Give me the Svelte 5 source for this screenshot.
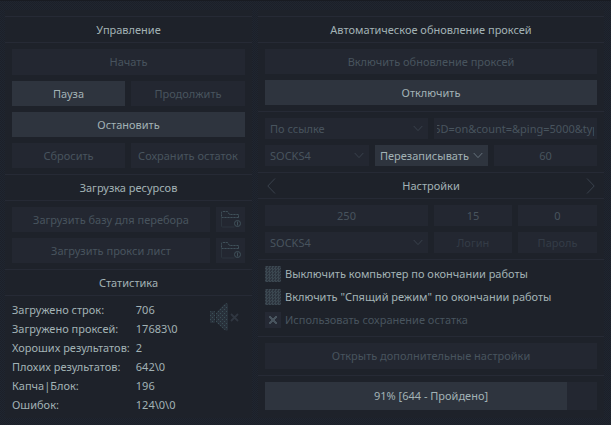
<script>
  import { onMount } from 'svelte';

  const stats = [
    ['Загружено строк:', '706'],
    ['Загружено проксей:', '17683\\0'],
    ['Хороших результатов:', '2'],
    ['Плохих результатов:', '642\\0'],
    ['Капча|Блок:', '196'],
    ['Ошибок:', '124\\0\\0']
  ];
  const loaders = ['Загрузить базу для перебора', 'Загрузить прокси лист'];
  const progress = 91;
  let link;

  onMount(() => {
    link.scrollLeft = 12;
  });
</script>

{#snippet chevron()}
  <svg class="chevron" width="10" height="7" viewBox="0 0 10 7" aria-hidden="true"><path d="M.7 1 5 5.6 9.3 1" /></svg>
{/snippet}

{#snippet folder()}
  <svg class="folder" width="20" height="17" viewBox="0 0 20 17" aria-hidden="true">
    <path d="M.5 5.5v-4q0-1 1-1h5l2 3h9v3M.5 6.500h17M.5 7v8q0 1 1 1h12" stroke="#2c353e" />
    <path stroke-dasharray="2 1" d="M.5 5.5v-4q0-1 1-1h5l2 3h9v3M.5 6.500h17" />
    <circle cx="16.500" cy="12.500" r="3" />
    <path d="M16.500 10.500v4" />
  </svg>
{/snippet}

<main>
  <section class="panel">
    <h2>Управление</h2>
    <div class="group controls">
      <button class="wide tall" disabled>Начать</button>
      <button>Пауза</button>
      <button disabled>Продолжить</button>
      <button class="wide">Остановить</button>
      <button disabled>Сбросить</button>
      <button disabled>Сохранить остаток</button>
    </div>
    <h2>Загрузка ресурсов</h2>
    <div class="group loaders">
      {#each loaders as name}
        <button disabled>{name}</button>
        <button disabled aria-label={name}>{@render folder()}</button>
      {/each}
    </div>
    <h2>Статистика</h2>
    <div class="stats">
      <dl>
        {#each stats as [label, value]}
          <dt>{label}</dt>
          <dd>{value}</dd>
        {/each}
      </dl>
      <button class="sound" aria-label="Звук">
        <svg width="29" height="29" viewBox="0 0 29 29" aria-hidden="true">
          <defs>
            <pattern id="dots" width="4" height="4" patternUnits="userSpaceOnUse">
              <rect width="4" height="4" fill="#29313b" />
              <path fill="#3b5057" d="M0 0h1v1H0zM2 2h1v1H2z" />
            </pattern>
          </defs>
          <path fill="url(#dots)" d="M1 8h3q1 0 1 1v10q0 1-1 1H1q-1 0-1-1V9q0-1 1-1zM6 10l8-8.500q4-2.500 4 .5v24q0 3-4 .5L6 19z" />
          <path stroke="#303741" stroke-width="1.800" d="M21 11l7 7M28 11l-7 7" />
        </svg>
      </button>
    </div>
  </section>

  <section class="panel">
    <h2>Автоматическое обновление проксей</h2>
    <div class="group stack">
      <button disabled>Включить обновление проксей</button>
      <button>Отключить</button>
    </div>
    <div class="group fields rule">
      <div class="row halves">
        <span class="select">
          <select disabled aria-label="Источник"><option>По ссылке</option></select>{@render chevron()}
        </span>
        <input class="link" bind:this={link} disabled aria-label="Ссылка" value="%5D=on&count=&ping=5000&type=" />
      </div>
      <div class="row thirds">
        <span class="select">
          <select disabled aria-label="Тип прокси"><option>SOCKS4</option></select>{@render chevron()}
        </span>
        <span class="select on">
          <select aria-label="Режим"><option>Перезаписывать</option></select>{@render chevron()}
        </span>
        <input disabled aria-label="Интервал" value="60" />
      </div>
    </div>
    <div class="pager">
      <h2>Настройки</h2>
      <button class="arrow prev" aria-label="Назад"><svg width="9" height="16" viewBox="0 0 9 16"><path d="M8 .5.800 8 8 15.500" /></svg></button>
      <button class="arrow next" aria-label="Вперёд"><svg width="9" height="16" viewBox="0 0 9 16"><path d="M1 .5 8.200 8 1 15.500" /></svg></button>
    </div>
    <div class="group fields">
      <div class="row quarters">
        <input disabled aria-label="Потоки" value="250" />
        <input disabled aria-label="Таймаут" value="15" />
        <input disabled aria-label="Пауза" value="0" />
      </div>
      <div class="row quarters">
        <span class="select">
          <select disabled aria-label="Протокол"><option>SOCKS4</option></select>{@render chevron()}
        </span>
        <input disabled aria-label="Логин" placeholder="Логин" />
        <input disabled aria-label="Пароль" placeholder="Пароль" />
      </div>
    </div>
    <div class="group checks rule">
      <label><input type="checkbox" />Выключить компьютер по окончании работы</label>
      <label><input type="checkbox" />Включить "Спящий режим" по окончании работы</label>
      <label class="off"><input type="checkbox" checked disabled />Использовать сохранение остатка</label>
    </div>
    <div class="group stack rule">
      <button class="tall" disabled>Открыть дополнительные настройки</button>
    </div>
    <div class="group rule">
      <div class="progress" role="progressbar" aria-label="Прогресс" aria-valuenow={progress}>
        <div class="fill" style="width: {progress}%"></div>
        <span>{progress}% [644 - Пройдено]</span>
      </div>
    </div>
  </section>
</main>

<style>
  :global(body) {
    background: #1c1f28;
  }
  main {
    box-sizing: border-box;
    min-height: 100vh;
    display: grid;
    grid-template-columns: 247fr 346fr;
    gap: 6px;
    align-items: stretch;
    padding: 9px 7px 8px 5px;
    border-top: 1px solid #181b22;
    background: repeating-conic-gradient(#1c1f28 0 25%, #1f2630 0 50%) 0 0 / 2px 2px;
    color: #a2b2b5;
    font: 11px/16px "Noto Sans", "Open Sans", sans-serif;
  }
  .panel {
    min-width: 0;
    padding-top: 6px;
    background: #1e222a;
  }
  h2 {
    margin: 0;
    border: solid #262a35;
    border-width: 1px 0;
    font: inherit;
    line-height: 25px;
    text-align: center;
  }
  .group {
    padding: 6px 7px;
  }
  .rule {
    border-top: 1px solid #262a35;
  }
  .controls,
  .loaders,
  .stack,
  .fields,
  .row {
    display: grid;
    gap: 6px;
  }
  .controls {
    grid-template-columns: 113fr 114fr;
  }
  .wide {
    grid-column: 1 / -1;
  }
  .loaders {
    grid-template-columns: 1fr 29px;
  }
  .halves {
    grid-template-columns: 1fr 1fr;
  }
  .thirds {
    grid-template-columns: 104fr 113fr 103fr;
  }
  .quarters {
    grid-template-columns: 163fr 78fr 79fr;
  }
  button,
  input,
  select {
    box-sizing: border-box;
    min-width: 0;
    margin: 0;
    padding: 0;
    border: 0;
    border-radius: 0;
    background: #2e343e;
    color: inherit;
    font: inherit;
  }
  button {
    height: 25px;
    text-align: center;
    white-space: nowrap;
  }
  .tall {
    height: 26px;
  }
  button:disabled,
  input:disabled,
  select:disabled {
    background: #232731;
    color: #48545e;
    opacity: 1;
  }
  input {
    width: 100%;
    height: 21px;
    text-align: center;
  }
  input::placeholder {
    color: #343c47;
    opacity: 1;
  }
  .link {
    border: solid #232731;
    border-width: 0 3px;
    text-align: left;
  }
  .select {
    position: relative;
    display: flex;
    min-width: 0;
  }
  select {
    appearance: none;
    width: 100%;
    height: 21px;
    padding-left: 5px;
  }
  .chevron {
    position: absolute;
    right: 5px;
    top: 7px;
    pointer-events: none;
  }
  svg {
    display: block;
    fill: none;
    stroke: #3a424d;
  }
  .on .chevron {
    stroke: #66727c;
  }
  .folder {
    margin: 0 auto;
    stroke: #40515a;
  }
  .stats {
    display: flex;
    justify-content: space-between;
    padding: 4px 7px;
  }
  dl {
    display: grid;
    grid-template-columns: auto auto;
    column-gap: 6px;
    margin: 0;
    line-height: 19px;
    white-space: nowrap;
  }
  dd {
    margin: 0;
  }
  .sound,
  .arrow {
    height: auto;
    background: none;
  }
  .sound {
    align-self: flex-start;
    margin: 3px 6px 0 0;
  }
  .sound svg {
    stroke: none;
  }
  .pager {
    position: relative;
  }
  .arrow {
    position: absolute;
    top: 6px;
  }
  .prev {
    left: 9px;
  }
  .next {
    right: 9px;
  }
  .checks {
    display: grid;
    gap: 7px;
    padding-bottom: 8px;
  }
  label {
    display: flex;
    gap: 4px;
    white-space: nowrap;
  }
  .off {
    color: #48545e;
  }
  input[type="checkbox"] {
    appearance: none;
    flex: none;
    width: 16px;
    height: 16px;
    background:
      repeating-conic-gradient(#3b4750 0 25%, transparent 0 50%) 0 0 / 3px 3px,
      #2c333d;
  }
  input[type="checkbox"]:disabled {
    display: grid;
    place-items: center;
    background: #252934;
  }
  input[type="checkbox"]:disabled::before {
    content: "";
    width: 8px;
    height: 8px;
    background:
      linear-gradient(45deg, transparent 42%, #48545e 42% 58%, transparent 58%),
      linear-gradient(-45deg, transparent 42%, #48545e 42% 58%, transparent 58%);
  }
  .progress {
    display: grid;
    height: 28px;
    background: #232731;
    line-height: 28px;
    text-align: center;
  }
  .progress > * {
    grid-area: 1 / 1;
  }
  .fill {
    background: #2e343e;
  }
</style>
